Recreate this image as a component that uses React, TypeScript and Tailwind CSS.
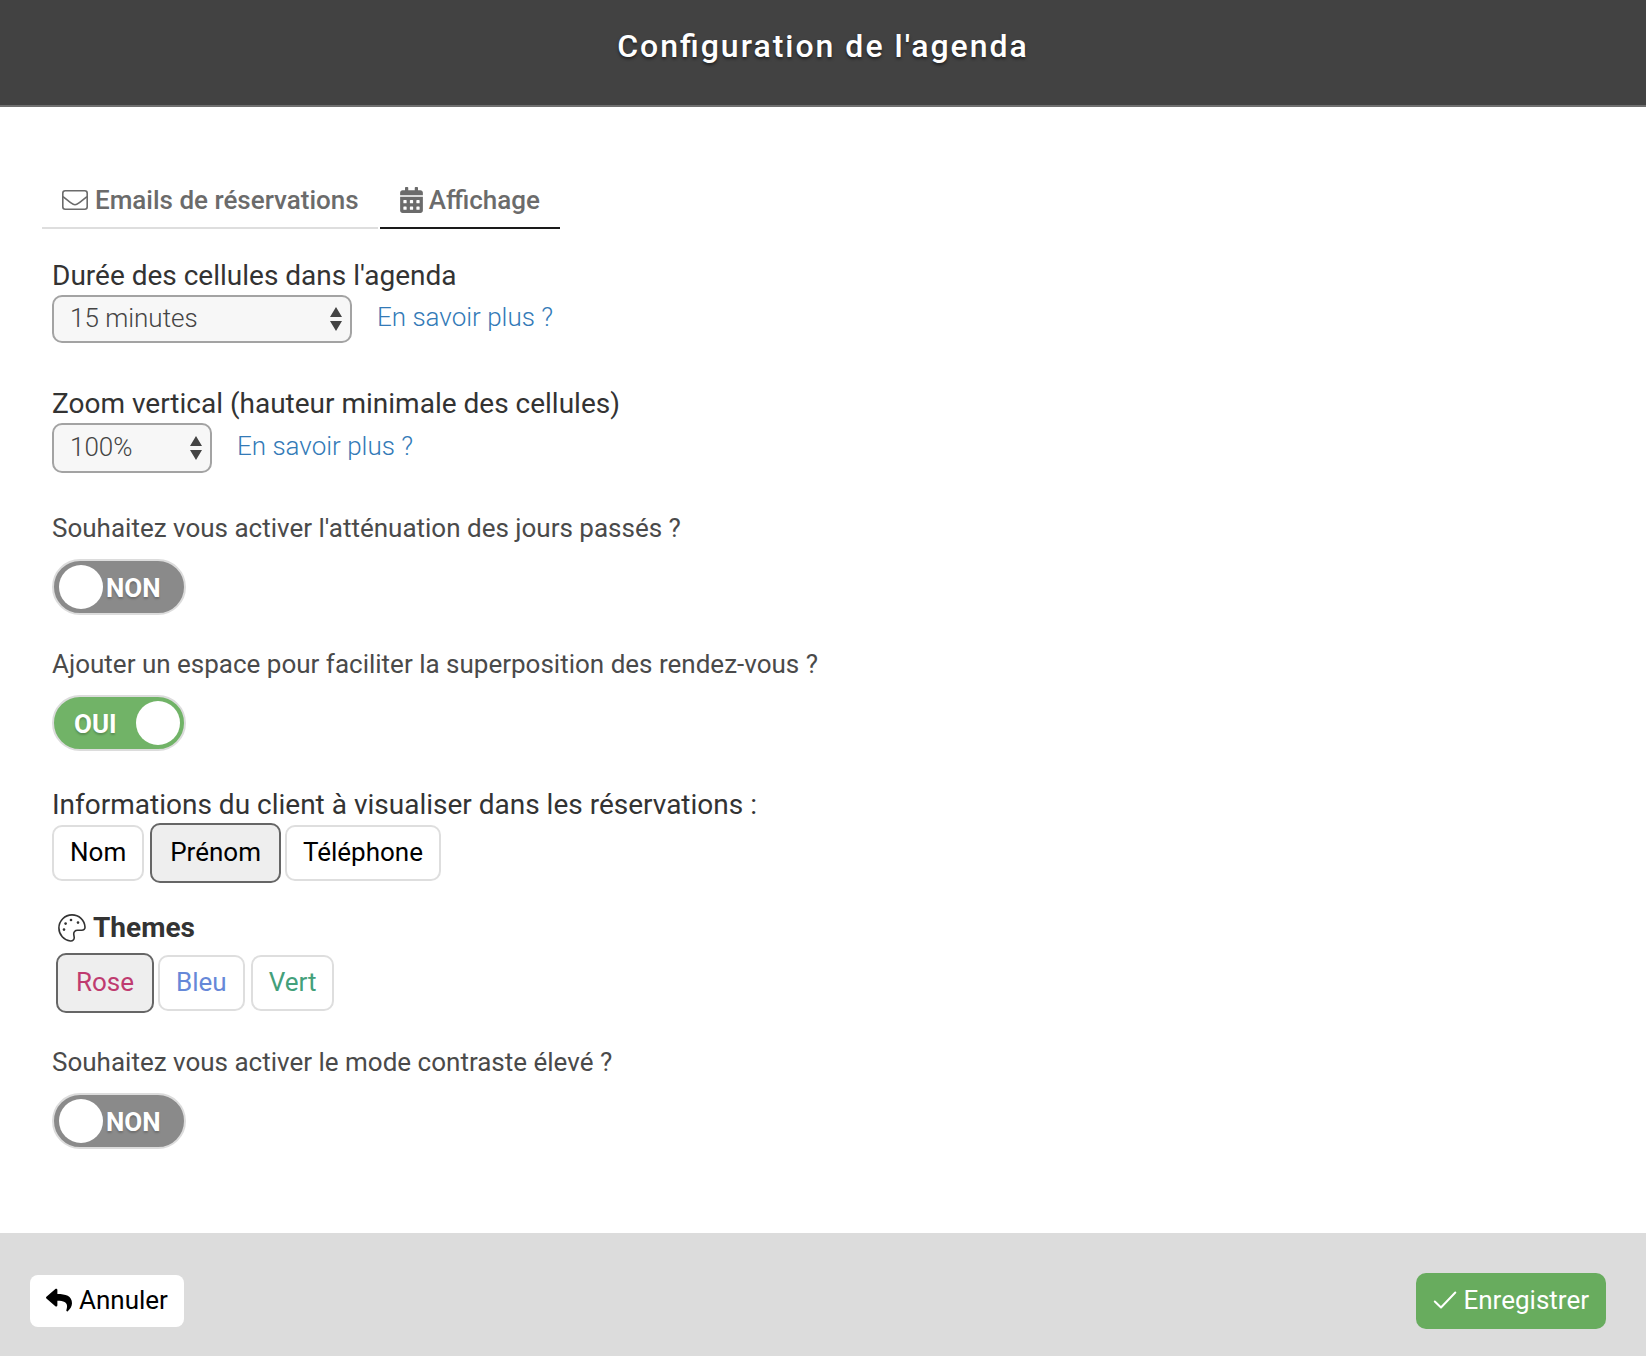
import { useState, type ReactNode } from "react"
import { FaCalendarAlt, FaReply } from "react-icons/fa"

interface FieldSelectProps{
    id:string
    label:string
    options:string[]
    size:string
}

interface SwitchProps{
    label:string
    initial:boolean
}

interface ChoiceProps{
    active:boolean
    color?:string
    onClick:()=>void
    children:ReactNode
}

const infos = ["Nom","Prénom","Téléphone"]

const themes = [
    {name:"Rose",color:"text-[#bf3b70]"},
    {name:"Bleu",color:"text-[#6688d8]"},
    {name:"Vert",color:"text-[#43a07a]"},
]

function EnvelopeIcon(){
    return <svg className="w-[26px] h-5" viewBox="0 0 26 20" fill="none" stroke="currentColor" strokeWidth="1.6" strokeLinejoin="round" aria-hidden="true">
        <rect x="0.8" y="0.8" width="24.4" height="18.4" rx="2.4" />
        <path d="M1 6.6c2.500 2 5.500 4.400 8 6.300 1.300 1 2.600 1.900 4 1.900s2.700-.9 4-1.900c2.500-1.900 5.500-4.300 8-6.300" />
    </svg>
}

function PaletteIcon(){
    return <svg className="w-7 h-7" viewBox="0 0 28 28" fill="none" stroke="currentColor" strokeWidth="1.6" strokeLinejoin="round" aria-hidden="true">
        <path d="M14 .9C6.800.9.9 6.700.9 14c0 6.700 5 12.200 11.500 13 2.400.3 4-1.600 3.800-3.700l-.4-2.700c-.4-2.700 1.300-4.300 3.700-4.300h4.200c2 0 3.400-1.200 3.300-3.200C26.600 6.200 21 .9 14 .9z" />
        <g fill="currentColor" stroke="none">
            <circle cx="6" cy="15.600" r="1.300" />
            <circle cx="7.600" cy="9.600" r="1.300" />
            <circle cx="13" cy="6" r="1.300" />
            <circle cx="20" cy="8.600" r="1.300" />
        </g>
    </svg>
}

function CheckIcon(){
    return <svg className="w-6 h-5" viewBox="0 0 24 20" fill="none" stroke="currentColor" strokeWidth="2" strokeLinecap="round" strokeLinejoin="round" aria-hidden="true">
        <path d="M1.800 11.500 8 17.500 22.300 2.500" />
    </svg>
}

function FieldSelect({id,label,options,size}:FieldSelectProps){
    return <div>
        <label htmlFor={id} className="block text-[28px] leading-[38px] text-[#333333]">{label}</label>
        <div className="flex items-center">
            <div className={`relative ${size}`}>
                <select id={id} className="appearance-none block w-full h-full rounded-[10px] border-2 border-[#a3a3a3] bg-[#f7f7f7] pl-4 pr-10 pb-[2px] text-[26px] font-light text-[#444444]">
                    {options.map(o => <option key={o}>{o}</option>)}
                </select>
                <svg className="absolute right-[10px] inset-y-0 my-auto w-3 h-6 pointer-events-none" viewBox="0 0 12 24" fill="#444444" aria-hidden="true">
                    <path d="M6 0l6 10H0zM6 24l6-10H0z" />
                </svg>
            </div>
            <a href="#" className="ml-[25px] pb-1 text-[26px] leading-9 font-light text-[#337ab7]">En savoir plus ?</a>
        </div>
    </div>
}

function Switch({label,initial}:SwitchProps){
    const [on,setOn] = useState(initial)

    return <label className="block w-fit cursor-pointer">
        <span className="block text-[26px] leading-9 text-[#4a4a4a]">{label}</span>
        <span className={`relative mt-[13px] flex items-center w-[134px] h-14 rounded-full border-2 border-[#dcdcdc] pr-1 ${on ? "bg-[#71b367]" : "bg-[#8a8a8a] pl-[5px]"}`}>
            <input type="checkbox" role="switch" className="absolute inset-0 opacity-0" checked={on} onChange={()=>setOn(!on)} />
            {!on && <span className="size-11 rounded-full bg-white"></span>}
            <span className={`flex-1 pt-[2px] text-[26px] leading-9 font-bold text-white text-shadow-[0_2px_2px_rgb(0_0_0/0.2)] ${on ? "pl-5" : "pl-[3px]"}`}>{on ? "OUI" : "NON"}</span>
            {on && <span className="size-11 rounded-full bg-white"></span>}
        </span>
    </label>
}

function Choice({active,color = "text-black",onClick,children}:ChoiceProps){
    return <button
        type="button"
        aria-pressed={active}
        onClick={onClick}
        className={`rounded-[10px] border-2 pb-[2px] text-[26px] ${color} ${active ? "h-15 px-[18px] -mr-[2px] bg-[#eeeeee] border-[#666666]" : "h-14 px-4 bg-white border-[#dedede]"}`}
    >{children}</button>
}

function App(){
    const [info,setInfo] = useState("Prénom")
    const [theme,setTheme] = useState("Rose")

    return <div className="flex flex-col min-h-screen bg-white font-['Roboto',sans-serif]">
        <header className="h-[107px] pt-6 bg-[#424242] border-b-2 border-[#6f6f6f] text-center">
            <h1 className="text-[32px] leading-11 font-medium tracking-[2px] [font-feature-settings:'liga'] text-white text-shadow-[0_2px_3px_rgb(0_0_0/0.5)]">Configuration de l'agenda</h1>
        </header>

        <main className="pt-[75px] pb-[84px] px-[42px]">
            <nav className="flex gap-[2px] text-[26px] leading-9 font-medium text-[#6b6b6b]">
                <a href="#" className="flex items-center gap-[7px] pl-5 pr-[19px] pb-[9px] border-b-2 border-[#dedede]">
                    <EnvelopeIcon />Emails de réservations
                </a>
                <a href="#" aria-current="page" className="flex items-center gap-[6px] px-5 pb-[9px] border-b-2 border-[#1a1a1a]">
                    <FaCalendarAlt className="w-[23px] h-[26px]" />Affichage
                </a>
            </nav>

            <form className="px-[10px] pt-7">
                <FieldSelect id="duree" label="Durée des cellules dans l'agenda" options={["15 minutes","30 minutes","60 minutes"]} size="w-[300px] h-12" />
                <div className="mt-[42px]">
                    <FieldSelect id="zoom" label="Zoom vertical (hauteur minimale des cellules)" options={["100%","125%","150%"]} size="w-40 h-[50px]" />
                </div>
                <div className="mt-[37px]">
                    <Switch label="Souhaitez vous activer l'atténuation des jours passés ?" initial={false} />
                </div>
                <div className="mt-[31px]">
                    <Switch label="Ajouter un espace pour faciliter la superposition des rendez-vous ?" initial={true} />
                </div>

                <fieldset className="mt-9">
                    <legend className="text-[28px] leading-9 text-[#333333]">Informations du client à visualiser dans les réservations :</legend>
                    <div className="flex items-center gap-[6px]">
                        {infos.map(i => <Choice key={i} active={info === i} onClick={()=>setInfo(i)}>{i}</Choice>)}
                    </div>
                </fieldset>

                <section className="mt-[27px] pl-1">
                    <h2 className="flex items-center gap-[7px] pl-[2px] text-[28px] leading-9 font-bold text-[#333333]"><PaletteIcon />Themes</h2>
                    <div className="flex items-center gap-[6px] mt-[7px]">
                        {themes.map(t => <Choice key={t.name} active={theme === t.name} color={t.color} onClick={()=>setTheme(t.name)}>{t.name}</Choice>)}
                    </div>
                </section>

                <div className="mt-[31px]">
                    <Switch label="Souhaitez vous activer le mode contraste élevé ?" initial={false} />
                </div>
            </form>
        </main>

        <footer className="flex flex-1 items-start justify-between bg-[#dcdcdc] pt-10 pb-[27px] pl-[30px] pr-10">
            <button type="button" className="flex items-center gap-[7px] h-[52px] mt-[2px] px-4 pb-[2px] rounded-lg bg-white text-[26px] text-black">
                <FaReply size={26} />Annuler
            </button>
            <button type="submit" className="flex items-center gap-[6px] h-14 px-[17px] pb-[2px] rounded-[10px] bg-[#68ac5e] text-[26px] text-white">
                <CheckIcon />Enregistrer
            </button>
        </footer>
    </div>
}

export default App
